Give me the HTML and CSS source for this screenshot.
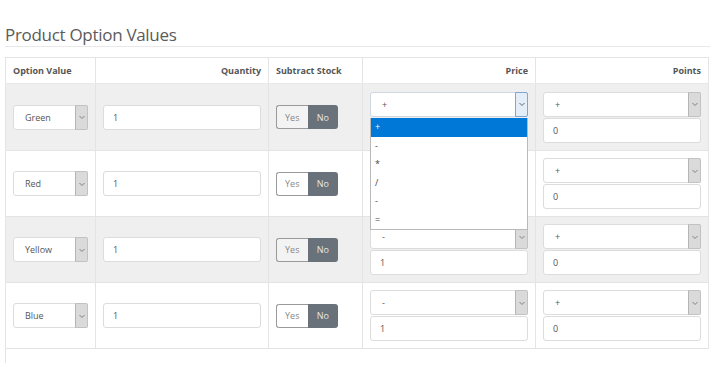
FILE: index.html
```html
<!DOCTYPE html>
<html>
<head>
<meta charset="utf-8">
<link rel="stylesheet" href="styles.css">
</head>
<body>
<div class="page">
  <h2 class="title">Product Option Values</h2>
  <table class="grid">
    <colgroup>
      <col class="w1"><col class="w2"><col class="w3"><col class="w4"><col class="w5">
    </colgroup>
    <thead>
      <tr>
        <th class="left">Option Value</th>
        <th class="right">Quantity</th>
        <th class="left">Subtract Stock</th>
        <th class="right">Price</th>
        <th class="right">Points</th>
      </tr>
    </thead>
    <tbody>
      <tr class="odd first">
        <td><div class="sel"><span class="val">Green</span><span class="btn"><svg viewBox="0 0 8 8"><path d="M1.5 3 L4 5.5 L6.5 3"/></svg></span></div></td>
        <td><div class="inp">1</div></td>
        <td><div class="toggle"><span class="yes">Yes</span><span class="no">No</span></div></td>
        <td class="pricecell">
          <div class="stack">
            <div class="sel focus"><span class="val">+</span><span class="btn"><svg viewBox="0 0 8 8"><path d="M1.5 3 L4 5.5 L6.5 3"/></svg></span></div>
            <div class="inp">1</div>
          </div>
          <ul class="dropdown">
            <li class="active">+</li>
            <li>-</li>
            <li>*</li>
            <li>/</li>
            <li>-</li>
            <li>=</li>
          </ul>
        </td>
        <td><div class="stack">
          <div class="sel"><span class="val">+</span><span class="btn"><svg viewBox="0 0 8 8"><path d="M1.5 3 L4 5.5 L6.5 3"/></svg></span></div>
          <div class="inp">0</div>
        </div></td>
      </tr>
      <tr>
        <td><div class="sel"><span class="val">Red</span><span class="btn"><svg viewBox="0 0 8 8"><path d="M1.5 3 L4 5.5 L6.5 3"/></svg></span></div></td>
        <td><div class="inp">1</div></td>
        <td><div class="toggle"><span class="yes">Yes</span><span class="no">No</span></div></td>
        <td><div class="stack">
          <div class="sel"><span class="val">-</span><span class="btn"><svg viewBox="0 0 8 8"><path d="M1.5 3 L4 5.5 L6.5 3"/></svg></span></div>
          <div class="inp">1</div>
        </div></td>
        <td><div class="stack">
          <div class="sel"><span class="val">+</span><span class="btn"><svg viewBox="0 0 8 8"><path d="M1.5 3 L4 5.5 L6.5 3"/></svg></span></div>
          <div class="inp">0</div>
        </div></td>
      </tr>
      <tr class="odd">
        <td><div class="sel"><span class="val">Yellow</span><span class="btn"><svg viewBox="0 0 8 8"><path d="M1.5 3 L4 5.5 L6.5 3"/></svg></span></div></td>
        <td><div class="inp">1</div></td>
        <td><div class="toggle"><span class="yes">Yes</span><span class="no">No</span></div></td>
        <td><div class="stack">
          <div class="sel"><span class="val">-</span><span class="btn"><svg viewBox="0 0 8 8"><path d="M1.5 3 L4 5.5 L6.5 3"/></svg></span></div>
          <div class="inp">1</div>
        </div></td>
        <td><div class="stack">
          <div class="sel"><span class="val">+</span><span class="btn"><svg viewBox="0 0 8 8"><path d="M1.5 3 L4 5.5 L6.5 3"/></svg></span></div>
          <div class="inp">0</div>
        </div></td>
      </tr>
      <tr>
        <td><div class="sel"><span class="val">Blue</span><span class="btn"><svg viewBox="0 0 8 8"><path d="M1.5 3 L4 5.5 L6.5 3"/></svg></span></div></td>
        <td><div class="inp">1</div></td>
        <td><div class="toggle"><span class="yes">Yes</span><span class="no">No</span></div></td>
        <td><div class="stack">
          <div class="sel"><span class="val">-</span><span class="btn"><svg viewBox="0 0 8 8"><path d="M1.5 3 L4 5.5 L6.5 3"/></svg></span></div>
          <div class="inp">1</div>
        </div></td>
        <td><div class="stack">
          <div class="sel"><span class="val">+</span><span class="btn"><svg viewBox="0 0 8 8"><path d="M1.5 3 L4 5.5 L6.5 3"/></svg></span></div>
          <div class="inp">0</div>
        </div></td>
      </tr>
      <tr class="tail">
        <td></td><td></td><td></td><td></td><td></td>
      </tr>
    </tbody>
  </table>
</div>
</body>
</html>
```
FILE: styles.css
```css
html, body {
  margin: 0;
  padding: 0;
  background: #fff;
}
body {
  font-family: "Open Sans", "Noto Sans", sans-serif;
  color: #555;
}
.page {
  padding-left: 5px;
  width: 705px;
}
.title {
  margin: 0;
  padding-top: 23px;
  height: 23px;
  font-size: 17px;
  letter-spacing: -0.3px;
  font-weight: 400;
  line-height: 23px;
  color: #5b5b5b;
  border-bottom: 1px solid #e8e8e8;
}
.grid {
  margin-top: 10px;
  border-collapse: collapse;
  width: 703px;
  table-layout: fixed;
}
.w1 { width: 90px; }
.w2 { width: 173px; }
.w3 { width: 94px; }
.w4 { width: 173px; }
.w5 { width: 173px; }
.grid th, .grid td {
  border: 1px solid #e4e4e4;
  padding: 0 7px;
}
.grid th {
  height: 25px;
  font-size: 9px;
  font-weight: 700;
  color: #555;
  border-bottom: 1px solid #e8e8e8;
}
.left { text-align: left; }
.right { text-align: right; }
.grid tbody td {
  height: 65px;
  padding-top: 0;
  padding-bottom: 0;
  vertical-align: middle;
}
.grid tbody tr.first td {
  height: 66px;
}
.grid tbody tr.odd td {
  background: #efefef;
}
.grid tbody tr.tail td {
  height: 14px;
  border-bottom: none;
  border-top: 1px solid #e4e4e4;
  border-left: none;
  border-right: none;
  background: #fff;
}
.grid tbody tr.tail td:first-child {
  border-left: 1px solid #e4e4e4;
}
.stack {
  display: flex;
  flex-direction: column;
  gap: 1px;
}
.sel, .inp {
  box-sizing: border-box;
  height: 25px;
  background: #fff;
  border: 1px solid #dcdcdc;
  border-radius: 3px;
  font-size: 9px;
  color: #555;
}
.inp {
  display: flex;
  align-items: center;
  padding-left: 9px;
}
.sel {
  display: flex;
  align-items: stretch;
}
.sel .val {
  flex: 1;
  display: flex;
  align-items: center;
  padding-left: 11px;
}
.sel .btn {
  width: 11px;
  background: #dadada;
  border: 1px solid #c2c2c2;
  border-left-color: #b5b5b5;
  border-radius: 0 2px 2px 0;
  display: flex;
  align-items: center;
  justify-content: center;
  margin: -1px -1px -1px 0;
}
.sel .btn svg {
  width: 8px;
  height: 8px;
  fill: none;
  stroke: #777;
  stroke-width: 0.9;
}
.sel.focus {
  border-color: #cfd8e0;
}
.sel.focus .btn {
  background: #e4eef8;
  border-color: #7fa7d0;
}
.sel.focus .btn svg {
  stroke: #555;
}
.toggle {
  display: flex;
  width: 62px;
  height: 24px;
  box-sizing: border-box;
  font-size: 9px;
}
.toggle .yes {
  flex: 1;
  display: flex;
  align-items: center;
  justify-content: center;
  border: 1px solid #9a9a9a;
  border-right: none;
  border-radius: 3px 0 0 3px;
  background: #fff;
  color: #888;
}
.grid tr.odd .toggle .yes {
  background: #f3f3f3;
}
.toggle .no {
  flex: 1;
  display: flex;
  align-items: center;
  justify-content: center;
  background: #69717a;
  border-radius: 0 3px 3px 0;
  color: #e8e8e8;
}
.pricecell {
  position: relative;
}
.dropdown {
  position: absolute;
  left: 7px;
  top: 34px;
  width: 158px;
  box-sizing: border-box;
  margin: 0;
  padding: 0;
  list-style: none;
  background: #fff;
  border: 1px solid #b9b9b9;
  border-top: none;
  z-index: 5;
  font-size: 9px;
  color: #444;
}
.dropdown li {
  height: 18.5px;
  line-height: 18.5px;
  padding-left: 4px;
}
.dropdown li.active {
  background: #0078d7;
  color: #fff;
}
```
